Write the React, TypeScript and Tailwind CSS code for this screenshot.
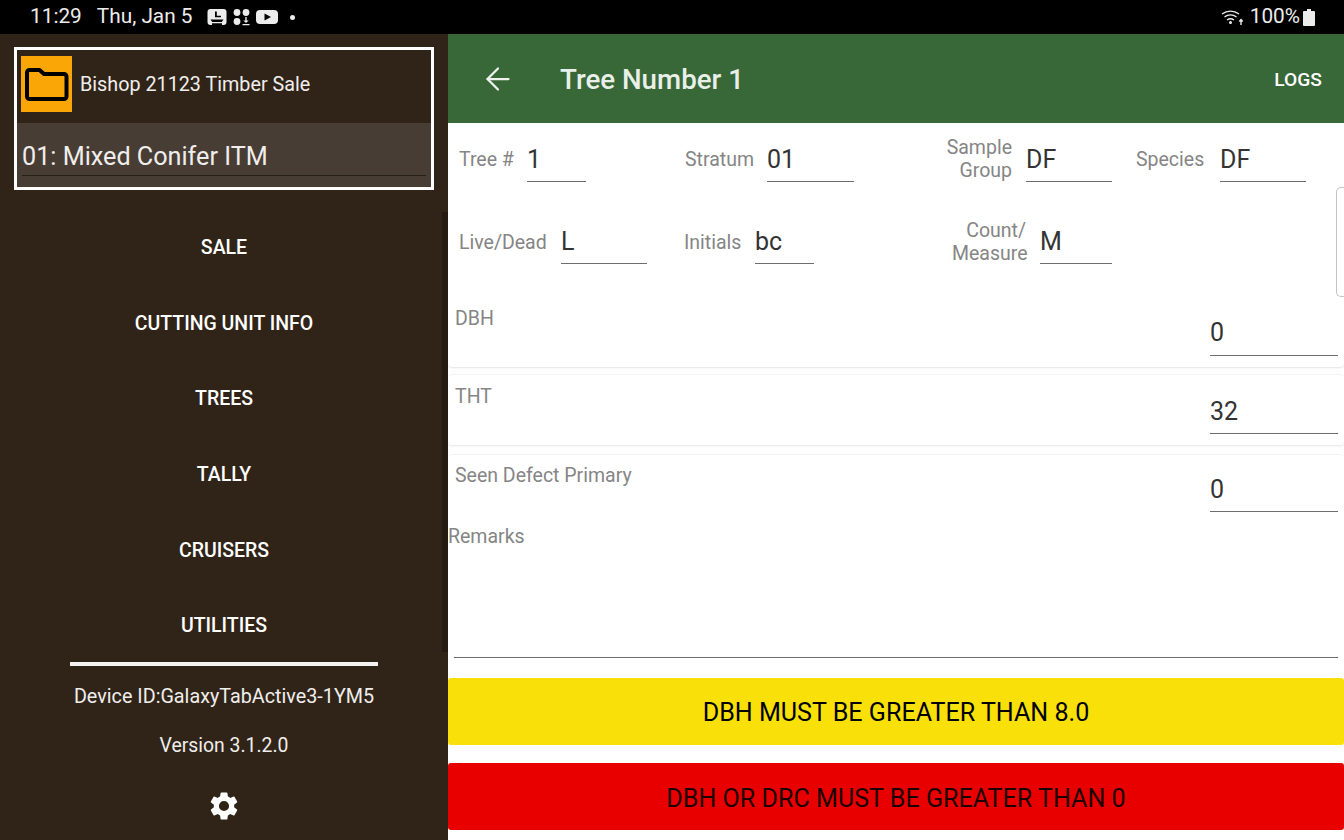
import { ArrowLeft } from "lucide-react";

const font = { fontFamily: "Roboto, sans-serif" };

const navItems = ["SALE", "CUTTING UNIT INFO", "TREES", "TALLY", "CRUISERS", "UTILITIES"];

const Field = ({ label, value, labelW, inputW, gap, right }: { label: React.ReactNode; value: string; labelW: string; inputW: string; gap: string; right?: boolean }) => (
  <div className="flex items-center h-[46px]">
    <div className={`${labelW} ${gap} shrink-0 whitespace-nowrap text-[19.5px] leading-[23px] text-[#858585] ${right ? "text-right" : ""}`}>{label}</div>
    <div className={`${inputW} shrink-0 h-[46px] border-b border-[#6e6e6e] text-[25px] leading-[47px] text-[#333333]`}>{value}</div>
  </div>
);

const CardRow = ({ label, value, cls, inputCls }: { label: string; value: string; cls: string; inputCls: string }) => (
  <div className={`flex justify-between bg-white rounded-[4px] ${cls}`}>
    <div className="pl-[7px] text-[19.5px] leading-[24px] text-[#858585]">{label}</div>
    <div className={`w-[128px] mr-[6px] h-[46px] border-b border-[#6e6e6e] text-[25px] text-[#333333] ${inputCls}`}>{value}</div>
  </div>
);

const StatusBar = () => (
  <div className="h-[34px] bg-black flex items-center justify-between pl-[30px] pr-[29px] text-[#ececec] text-[20.8px] shrink-0">
    <div className="flex items-center">
      <span>11:29</span>
      <span className="ml-[15px]">Thu, Jan 5</span>
      <svg className="ml-[14px]" width="20" height="18" viewBox="0 0 20 18" fill="#ececec">
        <rect x="0.500" y="1" width="19" height="16" rx="3" />
        <path d="M8 3.500h1.800v4.200H14v1.600H8z" fill="#000" />
        <path d="M3.500 11.500h13l-1.800 2.500H5.300zM5 15.200h10V17H5z" fill="#000" />
      </svg>
      <svg className="ml-[6px]" width="18" height="18" viewBox="0 0 18 18" fill="#ececec">
        <circle cx="4" cy="4.500" r="3.400" />
        <circle cx="13" cy="4.500" r="3.400" />
        <circle cx="4" cy="13.500" r="3.400" />
        <path d="M12.300 9h1.400v3.500h2l-2.700 2.500-2.700-2.500h2zM9.500 16h7v1.200h-7z" />
      </svg>
      <svg className="ml-[5px]" width="22" height="16" viewBox="0 0 22 16" fill="#ececec">
        <rect x="0" y="1" width="22" height="14" rx="4" />
        <path d="M8.500 4.500l6.500 3.500-6.500 3.500z" fill="#000" />
      </svg>
      <span className="ml-[12px] w-[5px] h-[5px] rounded-full bg-[#ececec]" />
    </div>
    <div className="flex items-center">
      <svg width="24" height="18" viewBox="0 0 24 18" fill="none" stroke="#ececec" strokeWidth="1.400">
        <path d="M1 6a14 14 0 0 1 17 0" />
        <path d="M3.500 9a10 10 0 0 1 12 0" />
        <path d="M6 12a6 6 0 0 1 7 0" />
        <circle cx="9.500" cy="14.500" r="0.800" fill="#ececec" />
        <path d="M20 17v-5M18.300 13.500l1.700-2 1.700 2" />
      </svg>
      <span className="ml-[5px]">100%</span>
      <svg className="ml-[3px]" width="12" height="17" viewBox="0 0 12 17" fill="#ececec">
        <path d="M4 0h4v2h3a1 1 0 0 1 1 1v13a1 1 0 0 1-1 1H1a1 1 0 0 1-1-1V3a1 1 0 0 1 1-1h3z" />
      </svg>
    </div>
  </div>
);

const Sidebar = () => (
  <div className="relative w-[448px] shrink-0 bg-[#302418] flex flex-col items-center text-white">
    <div className="mt-[13px] w-[420px] h-[143px] border-[3px] border-white flex flex-col">
      <div className="h-[73px] flex items-center pl-[4px] pb-[6px]">
        <div className="w-[51px] h-[56px] bg-[#f9a606] flex items-center justify-center">
          <svg width="44" height="36" viewBox="0 0 44 36">
            <path d="M4.500 4h10l4.500 4h20a2.500 2.500 0 0 1 2.500 2.500v20a2.500 2.500 0 0 1-2.500 2.500H4.500A2.500 2.500 0 0 1 2 30.500V6.500A2.500 2.500 0 0 1 4.500 4z" fill="#f9a606" stroke="#000" strokeWidth="4" strokeLinejoin="round" />
          </svg>
        </div>
        <span className="ml-[8px] mt-[3px] text-[19.75px] text-[#f0eeec]">Bishop 21123 Timber Sale</span>
      </div>
      <div className="flex-1 bg-[#483d34] px-[5px] pt-[14px]">
        <div className="h-[39px] border-b border-[#25201a] text-[25.2px] leading-[39px] text-[#f0eeec]">01: Mixed Conifer ITM</div>
      </div>
    </div>
    <nav className="w-full mt-[20px] flex flex-col">
      {navItems.map((item) => (
        <div key={item} className="h-[75.6px] flex items-center justify-center text-[19.5px] font-medium">{item}</div>
      ))}
    </nav>
    <div className="w-[308px] h-[4px] bg-[#f5f3ef] mt-[-2px]" />
    <div className="mt-[19px] text-[19.75px] leading-[24px] text-[#f0eeec]">Device ID:GalaxyTabActive3-1YM5</div>
    <div className="mt-[25px] text-[19.4px] leading-[24px] text-[#f0eeec]">Version 3.1.2.0</div>
    <svg className="mt-[31px]" width="34" height="34" viewBox="0 0 24 24" fill="#ffffff">
      <path d="M19.140 12.940c.04-.3.06-.61.06-.94s-.02-.64-.07-.94l2.030-1.580a.49.49 0 0 0 .12-.61l-1.920-3.320a.49.49 0 0 0-.59-.22l-2.390.96a7 7 0 0 0-1.620-.94l-.36-2.540a.48.48 0 0 0-.48-.41h-3.840a.48.48 0 0 0-.47.41l-.36 2.540c-.59.24-1.130.57-1.620.94l-2.390-.96a.49.49 0 0 0-.59.22L2.740 8.870a.48.48 0 0 0 .12.61l2.030 1.580c-.05.3-.09.63-.09.94s.02.64.07.94l-2.030 1.580a.49.49 0 0 0-.12.61l1.920 3.320c.12.22.37.29.59.22l2.390-.96c.5.38 1.030.7 1.620.94l.36 2.540c.05.24.24.41.48.41h3.840c.24 0 .44-.17.47-.41l.36-2.540c.59-.24 1.130-.56 1.620-.94l2.390.96c.22.08.47 0 .59-.22l1.920-3.320a.48.48 0 0 0-.12-.61zM12 15.600a3.600 3.600 0 1 1 0-7.200 3.600 3.600 0 0 1 0 7.200z" />
    </svg>
    <div className="absolute right-0 top-[178px] h-[440px] w-[6px] bg-[#251b12]" />
  </div>
);

export default function App() {
  return (
    <div className="w-[1344px] h-[840px] overflow-hidden flex flex-col bg-white" style={font}>
      <StatusBar />
      <div className="flex flex-1 min-h-0">
        <Sidebar />
        <div className="relative flex-1 flex flex-col bg-white">
          <div className="h-[89px] bg-[#386738] flex items-center text-white shrink-0">
            <ArrowLeft className="ml-[32px] text-[#eef3ee]" size={36} strokeWidth={1.500} />
            <span className="ml-[44px] mt-[3px] text-[27.7px] font-medium text-[#e9f0e9]">Tree Number 1</span>
            <span className="ml-auto mr-[22px] mt-[3px] text-[19.2px] font-medium">LOGS</span>
          </div>

          <div className="flex pl-[11px] mt-[13px]">
            <Field label="Tree #" value="1" labelW="w-[54px]" gap="mr-[14px]" inputW="w-[59px]" />
            <div className="w-[99px]" />
            <Field label="Stratum" value="01" labelW="w-[68px]" gap="mr-[14px]" inputW="w-[87px]" />
            <div className="w-[77px]" />
            <Field label={<>Sample<br />Group</>} value="DF" labelW="w-[81px]" gap="mr-[14px]" inputW="w-[86px]" right />
            <div className="w-[24px]" />
            <Field label="Species" value="DF" labelW="w-[70px]" gap="mr-[14px]" inputW="w-[86px]" />
          </div>
          <div className="flex pl-[11px] mt-[36px]">
            <Field label="Live/Dead" value="L" labelW="w-[88px]" gap="mr-[14px] mt-[2px]" inputW="w-[86px]" />
            <div className="w-[37px]" />
            <Field label="Initials" value="bc" labelW="w-[57px]" gap="mr-[14px] mt-[2px]" inputW="w-[59px]" />
            <div className="w-[138px]" />
            <Field label={<>Count/<br />Measure</>} value="M" labelW="w-[74px]" gap="mr-[14px] mt-[2px]" inputW="w-[72px]" right />
          </div>

          <div className="absolute right-0 top-[153px] w-[8px] h-[110px] border border-r-0 border-[#c4c4c4] rounded-l-[5px]" />

          <div className="mt-[42px] flex flex-col">
            <CardRow label="DBH" value="0" inputCls="mt-[3px] leading-[45px]" cls="h-[61px] pt-[1px] shadow-[0_1px_2px_rgba(0,0,0,0.1)]" />
            <CardRow label="THT" value="32" inputCls="mt-[3px] leading-[47px]" cls="mt-[7px] h-[71px] pt-[10px] border-t border-[#f3f3f3] shadow-[0_1px_2px_rgba(0,0,0,0.1)]" />
            <CardRow label="Seen Defect Primary" value="0" inputCls="mt-[2px] leading-[47px]" cls="mt-[9px] h-[71px] pt-[9px] border-t border-[#f3f3f3]" />
          </div>

          <div className="text-[19.5px] leading-[24px] text-[#858585]">Remarks</div>
          <div className="ml-[6px] h-[109px] border-b border-[#6e6e6e] mr-[6px]" />

          <div className="mt-[20px] h-[67px] pt-[3px] bg-[#f8e008] rounded-[3px] flex items-center justify-center text-[25.100px] text-black">DBH MUST BE GREATER THAN 8.0</div>
          <div className="mt-[18px] h-[67px] pt-[5px] bg-[#e80000] rounded-[3px] flex items-center justify-center text-[25.100px] text-[#1c0000]">DBH OR DRC MUST BE GREATER THAN 0</div>
        </div>
      </div>
    </div>
  );
}
